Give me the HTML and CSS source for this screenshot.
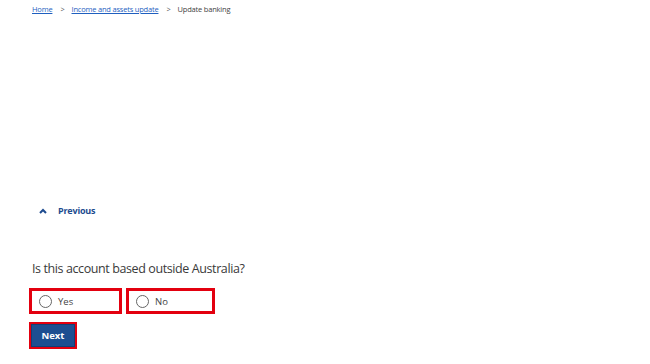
FILE: index.html
```html
<!DOCTYPE html>
<html lang="en">
<head>
    <meta charset="UTF-8">
    <meta name="viewport" content="width=device-width, initial-scale=1.0">
    <title>Update banking</title>
    <link rel="stylesheet" href="styles.css">
</head>
<body>
    <nav class="breadcrumb">
        <a href="#">Home</a>
        <span class="sep">&gt;</span>
        <a href="#">Income and assets update</a>
        <span class="sep">&gt;</span>
        <span class="current">Update banking</span>
    </nav>

    <div class="main">
        <button class="previous" type="button">
            <svg class="chevron" width="8" height="6" viewBox="0 0 8 6"><path d="M1 5 L4 2 L7 5" fill="none" stroke="#1d4b8f" stroke-width="2"/></svg>
            <span>Previous</span>
        </button>

        <div class="question">Is this account based outside Australia?</div>

        <div class="options">
            <label class="option option-yes">
                <span class="radio"></span>
                <span>Yes</span>
            </label>
            <label class="option option-no">
                <span class="radio"></span>
                <span>No</span>
            </label>
        </div>

        <div class="next-wrap">
            <button class="next" type="button">Next</button>
        </div>
    </div>
</body>
</html>
```

FILE: styles.css
```css
body {
    margin: 0;
    font-family: "Open Sans", "Noto Sans", sans-serif;
    color: #333;
    background-color: #fff;
}
.breadcrumb {
    padding: 3px 0 0 32px;
    font-size: 7.5px;
    letter-spacing: -0.2px;
    line-height: 12px;
    display: flex;
}
.breadcrumb a {
    color: #1f5fbf;
    text-decoration: underline;
}
.breadcrumb .sep {
    color: #555;
    padding: 0 7px 0 8px;
}
.breadcrumb .current {
    color: #444;
}
.main {
    padding: 189px 0 0 29px;
}
.previous {
    display: flex;
    align-items: center;
    background: none;
    border: none;
    padding: 0 0 0 10px;
    font-family: inherit;
    font-size: 9px;
    letter-spacing: -0.2px;
    font-weight: 700;
    color: #1d4b8f;
    cursor: pointer;
}
.previous .chevron {
    margin-right: 11px;
}
.question {
    margin: 43px 0 0 3px;
    font-size: 12.5px;
    letter-spacing: -0.4px;
    line-height: 18px;
    color: #3a3a3a;
}
.options {
    display: flex;
    gap: 4px;
    margin-top: 10px;
}
.option {
    box-sizing: border-box;
    height: 26px;
    border: 3px solid #e3000f;
    display: flex;
    align-items: center;
    padding-left: 7px;
    font-size: 9.5px;
    color: #444;
}
.option-yes {
    width: 93px;
}
.option-no {
    width: 89px;
}
.radio {
    box-sizing: border-box;
    width: 13px;
    height: 13px;
    border: 1.5px solid #666;
    border-radius: 50%;
    margin-right: 6px;
}
.next-wrap {
    display: inline-block;
    margin-top: 8px;
    border: 2px solid #e3000f;
}
.next {
    display: block;
    width: 44px;
    height: 23px;
    border: 1px solid #163e74;
    background-color: #1d4f91;
    color: #fff;
    font-family: inherit;
    font-size: 9.5px;
    font-weight: 700;
    cursor: pointer;
}
```
